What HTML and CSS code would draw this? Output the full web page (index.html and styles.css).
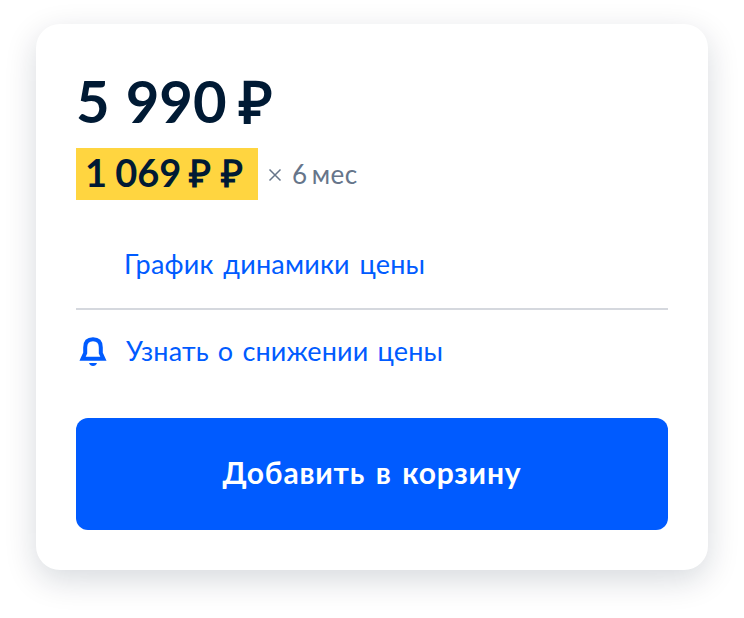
FILE: index.html
```html
<!DOCTYPE html>
<html lang="ru">
<head>
<meta charset="utf-8">
<title>Цена</title>
<link rel="stylesheet" href="styles.css">
</head>
<body>
<main class="card">
  <div class="price">5 990<span class="ruble">₽</span></div>
  <div class="installment">
    <div class="badge">1 069<span class="ruble">₽</span><span class="ruble">₽</span></div>
    <svg class="times" viewBox="0 0 14 14"><path d="M1.500 1.500l11 11M12.500 1.500l-11 11"/></svg>
    <span class="months">6 мес</span>
  </div>
  <a class="link chart">График динамики цены</a>
  <a class="link notify">
    <svg class="bell" viewBox="0 0 28 32"><path class="body" d="M3.600 22.700L6.200 17V11.400C6.200 5.800 9 3.200 14 3.200S21.800 5.800 21.800 11.400V17l2.600 5.700z"/><path class="clapper" d="M10 27h8c-.7 2-2 3-4 3s-3.300-1-4-3z"/></svg>
    <span class="notify-text">Узнать о снижении цены</span>
  </a>
  <button class="buy">Добавить в корзину</button>
</main>
</body>
</html>
```
FILE: styles.css
```css
* { box-sizing: border-box; }
body { margin: 0; min-height: 618px; padding: 24px 36px; background: #fff; font-family: Lato, "Liberation Sans", sans-serif; color: #001a34; }
.card { width: 672px; height: 546px; padding: 40px; border-radius: 24px; background: #fff; box-shadow: 0 10px 32px rgba(0, 26, 52, .16); display: flex; flex-direction: column; }
.price { height: 84px; line-height: 74px; font-size: 58px; font-weight: 700; word-spacing: 2px; white-space: nowrap; }
.price .ruble { margin-left: 12px; }
.ruble { margin-left: 8px; }
.installment { display: flex; align-items: center; height: 52px; }
.badge { width: 182px; height: 52px; padding-left: 9px; line-height: 48px; font-size: 38px; font-weight: 700; word-spacing: -1px; background: #ffd540; white-space: nowrap; }
.badge .ruble + .ruble { margin-left: 10px; }
.times { width: 14px; height: 14px; margin: 2px 10px 0; fill: none; stroke: #66758a; stroke-width: 1.5; }
.months { font-size: 26px; line-height: 52px; letter-spacing: .5px; word-spacing: -3px; color: #66758a; white-space: nowrap; }
.link { color: #005bff; font-size: 27px; white-space: nowrap; }
.chart { height: 110px; padding: 45px 0 0 48px; line-height: 38px; letter-spacing: .2px; word-spacing: 2.5px; border-bottom: 2px solid #d5d8de; }
.notify { display: flex; height: 108px; }
.bell { width: 28px; height: 32px; margin: 26px 19px 0 3px; }
.body { fill: none; stroke: #005bff; stroke-width: 4; }
.clapper { fill: #005bff; }
.notify-text { line-height: 40px; margin-top: 21px; letter-spacing: .15px; word-spacing: 2px; }
.buy { height: 112px; padding: 0 0 3px; border: 0; border-radius: 12px; background: #005bff; color: #fff; font: 700 30px/109px Lato, "Liberation Sans", sans-serif; letter-spacing: .8px; word-spacing: 2.5px; }
```
